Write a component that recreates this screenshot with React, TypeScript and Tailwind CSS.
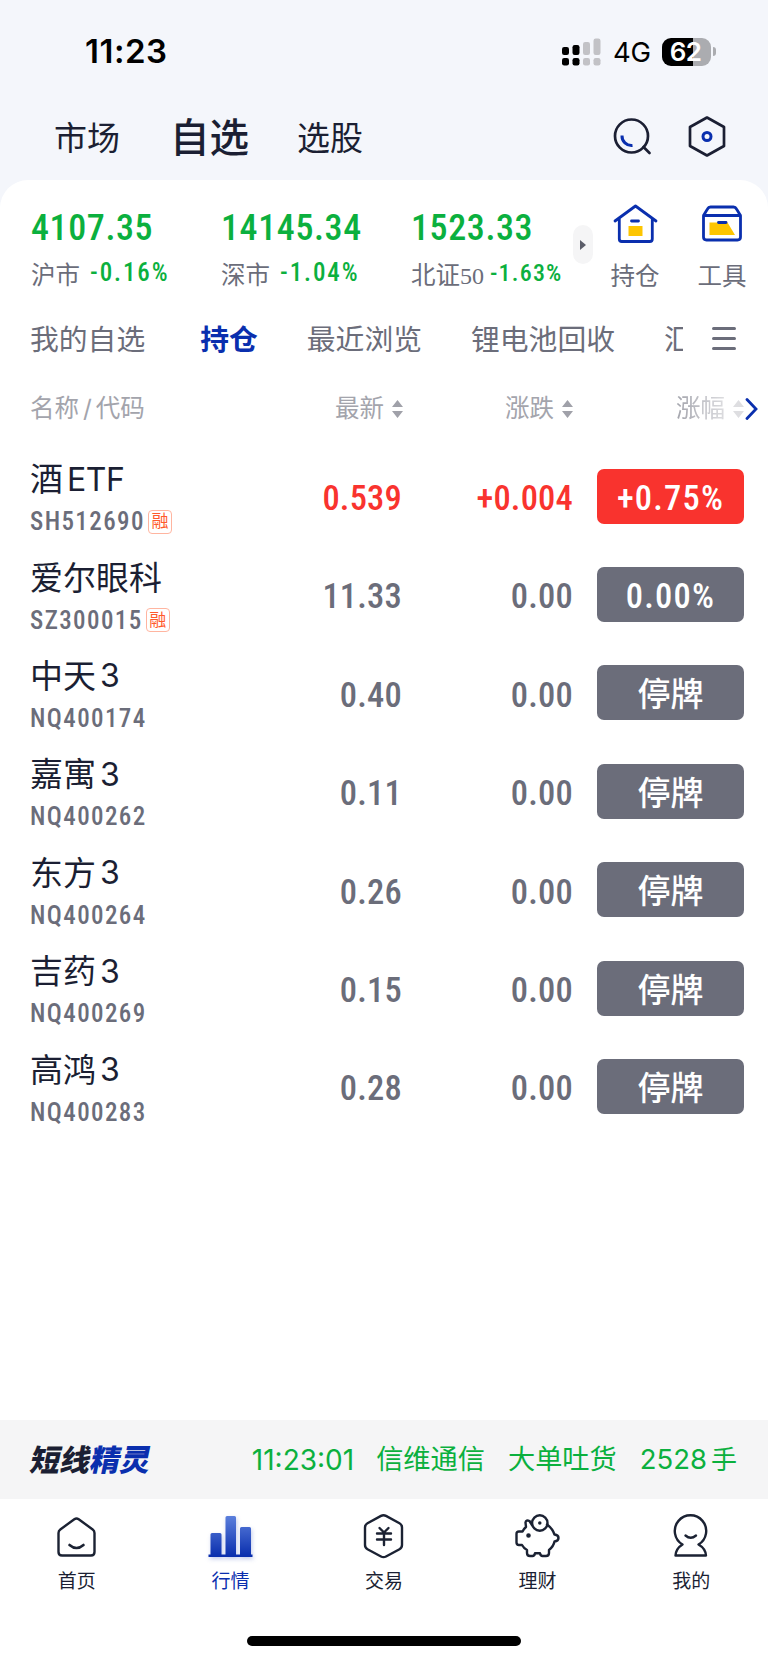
import type { ReactNode } from 'react';
import clsx from 'clsx';

const NUM = 'font-["Roboto_Condensed",Roboto,"Noto_Sans_CJK_SC",sans-serif]';

const indices = [
  { name: '沪市', value: '4107.35', change: '-0.16%', width: 'w-[190px]' },
  { name: '深市', value: '14145.34', change: '-1.04%', width: 'w-[190px]' },
  { name: '北证', digits: '50', value: '1523.33', change: '-1.63%', width: 'w-[162px]' },
];

const groups = ['我的自选', '持仓', '最近浏览', '锂电池回收', '汇'];

type Stock = {
  name: string;
  suffix?: string;
  code: string;
  margin?: boolean;
  price: string;
  diff: string;
  rate: string;
  up?: boolean;
};

const stocks: Stock[] = [
  { name: '酒', suffix: 'ETF', code: 'SH512690', margin: true, price: '0.539', diff: '+0.004', rate: '+0.75%', up: true },
  { name: '爱尔眼科', code: 'SZ300015', margin: true, price: '11.33', diff: '0.00', rate: '0.00%' },
  { name: '中天', suffix: '3', code: 'NQ400174', price: '0.40', diff: '0.00', rate: '停牌' },
  { name: '嘉寓', suffix: '3', code: 'NQ400262', price: '0.11', diff: '0.00', rate: '停牌' },
  { name: '东方', suffix: '3', code: 'NQ400264', price: '0.26', diff: '0.00', rate: '停牌' },
  { name: '吉药', suffix: '3', code: 'NQ400269', price: '0.15', diff: '0.00', rate: '停牌' },
  { name: '高鸿', suffix: '3', code: 'NQ400283', price: '0.28', diff: '0.00', rate: '停牌' },
];

const StatusBar = () => (
  <div className="flex h-[103px] items-center pl-[85px] pr-[52px]">
    <span className="text-[33px] font-semibold leading-none tracking-[0.5px] text-black">11:23</span>
    <div className="ml-auto flex items-center">
      <svg width="39" height="28" viewBox="0 0 39 28">
        <g fill="#000">
          <rect x="0" y="9" width="7" height="8" rx="2.2" />
          <rect x="10.5" y="7" width="7" height="10" rx="2.2" />
          <rect x="0" y="20" width="7" height="7.5" rx="2.2" />
          <rect x="10.5" y="20" width="7" height="7.5" rx="2.2" />
        </g>
        <g fill="#c2c2c6">
          <rect x="21" y="4" width="7" height="13" rx="2.2" />
          <rect x="31.5" y="0.5" width="7" height="16.5" rx="2.2" />
          <rect x="21" y="20" width="7" height="7.5" rx="2.2" />
          <rect x="31.5" y="20" width="7" height="7.5" rx="2.2" />
        </g>
      </svg>
      <span className="ml-[12px] w-[38px] pt-[2px] text-[27.5px] leading-none tracking-[-0.2px] text-black">4G</span>
      <div className="ml-[11px] flex h-7 w-[49px] items-center justify-center rounded-[9px] bg-[linear-gradient(90deg,#000_31px,#abacb0_31px)] pr-[2px] text-[26px] font-semibold leading-none tracking-[-0.6px] text-white">
        62
      </div>
      <div className="ml-[2px] h-[9px] w-[3px] rounded-r-full bg-[#abacb0]" />
    </div>
  </div>
);

const TopNav = () => (
  <div className="flex h-[77px] items-center pl-[54px] pr-[42px] pb-[10px] text-[#1b1f33]">
    <span className="w-[116px] pt-[3px] text-[33px] leading-none">市场</span>
    <span className="w-[127px] pt-[4px] text-[39.5px] font-medium leading-none">自选</span>
    <span className="pt-[3px] text-[33px] leading-none">选股</span>
    <svg className="ml-auto" width="40" height="40" viewBox="0 0 40 40" fill="none" strokeLinecap="round">
      <circle cx="19.5" cy="19" r="16.5" stroke="#1b1f33" strokeWidth="2.7" />
      <path d="M31.5 30l6 6" stroke="#1b1f33" strokeWidth="2.7" />
      <path d="M10 18.500a9.5 9.5 0 0 0 10.500 10" stroke="#0a2fae" strokeWidth="3" strokeLinecap="butt" />
    </svg>
    <svg className="ml-[36px]" width="38" height="42" viewBox="0 0 38 42" fill="none">
      <path d="M19 1.500l17 9.500v19L19 39.500 2 30V11z" stroke="#1b1f33" strokeWidth="2.7" strokeLinejoin="round" />
      <circle cx="19" cy="20.500" r="4" stroke="#0a2fae" strokeWidth="3" />
    </svg>
  </div>
);

const Shortcut = ({ label, className, children }: { label: string; className: string; children: ReactNode }) => (
  <div className={clsx('flex w-[50px] flex-col items-center pt-[22px]', className)}>
    <svg
      width="46"
      height="42"
      viewBox="0 0 46 42"
      fill="none"
      stroke="#0a2fae"
      strokeWidth="2.8"
      strokeLinejoin="round"
      strokeLinecap="round"
      className="shrink-0"
    >
      {children}
    </svg>
    <span className="mt-[20px] whitespace-nowrap text-[24.5px] leading-none text-[#6b6d7a]">{label}</span>
  </div>
);

const Indices = () => (
  <div className="flex h-[125px] pl-[31px]">
    {indices.map((item) => (
      <div key={item.name} className={clsx('shrink-0 pt-[30px]', item.width)}>
        <div className={clsx(NUM, 'text-[36px] font-medium leading-[36px] tracking-[0.6px] text-[#0bb03e]')}>
          {item.value}
        </div>
        <div className="mt-[17px] flex items-baseline leading-[24px]">
          <span className="whitespace-nowrap text-[24.5px] text-[#6b6d7a]">
            {item.name}
            {item.digits && <span className='font-["Liberation_Serif",serif] text-[24px]'>{item.digits}</span>}
          </span>
          <span
            className={clsx(
              NUM,
              'relative -top-[3px] font-medium text-[#0bb03e]',
              item.digits ? 'ml-[6px] text-[24px] tracking-[1.2px]' : 'ml-[10px] text-[25px] tracking-[1.9px]',
            )}
          >
            {item.change}
          </span>
        </div>
      </div>
    ))}
    <div className="mt-[45px] flex h-[39px] w-5 shrink-0 items-center justify-center rounded-full bg-[#f5f5f6]">
      <svg width="6" height="10" viewBox="0 0 6 10">
        <path d="M0 0l6 5-6 5z" fill="#5b5d69" />
      </svg>
    </div>
    <Shortcut label="持仓" className="ml-[17px]">
      <path d="M3 19L23.500 4 44 19M7.300 16.500V37q0 2.500 2.500 2.500h28q2.500 0 2.500-2.500V16.500M19.500 19h7" />
      <path d="M16.500 24h14v10h-14z" fill="#fdc500" stroke="none" />
    </Shortcut>
    <Shortcut label="工具" className="ml-[37px]">
      <path d="M4.500 13.500V35q0 3 3 3h31q3 0 3-3V13.500zM4.500 13.500l4-6.500q1-2 3-2h23q2 0 3 2l4 6.500" />
      <path d="M10.500 20.500h18L36 33H10.500z" fill="#fdc500" stroke="none" />
      <path d="M19.500 20.500h7.500" />
    </Shortcut>
  </div>
);

const GroupTabs = () => (
  <div className="flex h-[70px] items-center pl-[30px]">
    <div className="flex w-[653px] gap-[49px] overflow-hidden text-[28.8px] leading-[40px] text-[#6b6d7a]">
      {groups.map((name) => (
        <span
          key={name}
          className={clsx('shrink-0 whitespace-nowrap first:mr-[6px]', name === '持仓' && 'font-bold text-[#0a2fae]')}
        >
          {name}
        </span>
      ))}
    </div>
    <div className="mb-[4px] ml-[29px] flex w-[24px] flex-col gap-[7px]">
      <i className="h-[3px] rounded-full bg-[#6b6d7a]" />
      <i className="h-[3px] rounded-full bg-[#6b6d7a]" />
      <i className="h-[3px] rounded-full bg-[#6b6d7a]" />
    </div>
  </div>
);

const SortArrows = () => (
  <svg width="11" height="18" viewBox="0 0 11 18" fill="#a0a1a9">
    <path d="M5.500 0L11 7H0zM0 11h11l-5.500 7z" />
  </svg>
);

const ColumnHeader = () => (
  <div className="flex h-[68px] items-center pb-[1px] pl-[30px] text-[24.5px] leading-none text-[#a3a4ac]">
    <span className="w-[180px]">
      名称<span className="mx-[4px]">/</span>代码
    </span>
    <div className="flex w-[193px] items-center justify-end gap-2">
      最新 <SortArrows />
    </div>
    <div className="flex w-[170px] items-center justify-end gap-2">
      涨跌 <SortArrows />
    </div>
    <div className="flex w-[171px] items-center justify-end gap-2 [mask-image:linear-gradient(90deg,#000_60%,rgba(0,0,0,0.35)_90%)]">
      涨幅 <SortArrows />
    </div>
    <svg className="ml-[1px]" width="13" height="22" viewBox="0 0 13 22" fill="none">
      <path d="M2 1.500l9 9.500-9 9.500" stroke="#0a2fae" strokeWidth="2.8" strokeLinecap="round" />
    </svg>
  </div>
);

const StockRow = ({ stock }: { stock: Stock }) => {
  const tone = stock.up ? 'text-[#f9332e]' : 'text-[#6b6d7a]';
  const halted = stock.rate === '停牌';

  return (
    <div className="flex h-[98.4px] items-center pl-[30px]">
      <div className="w-[190px] pt-[9px]">
        <div className="flex h-[42px] items-center gap-[4px] whitespace-nowrap text-[33px] leading-none text-[#1b1f33]">
          {stock.name}
          {stock.suffix && <span className="text-[32px] tracking-[-0.5px]">{stock.suffix}</span>}
        </div>
        <div className="flex h-[42px] items-center text-[#6b6d7a]">
          <span className={clsx(NUM, 'text-[25px] font-medium leading-none tracking-[1.4px]')}>{stock.code}</span>
          {stock.margin && (
            <span className="ml-[3px] flex size-6 items-center justify-center rounded-[4px] border border-[#ffb5a0] text-[17px] leading-none text-[#ff5a2b]">
              融
            </span>
          )}
        </div>
      </div>
      <span className={clsx(NUM, tone, 'w-[182px] pt-[4px] text-right text-[34.5px] font-medium leading-none tracking-[0.2px]')}>
        {stock.price}
      </span>
      <span className={clsx(NUM, tone, 'w-[171px] pt-[4px] text-right text-[34.5px] font-medium leading-none tracking-[0.2px]')}>
        {stock.diff}
      </span>
      <span
        className={clsx(
          'ml-6 flex h-[55px] w-[147px] items-center justify-center rounded-[7px] pt-[4px] font-medium leading-none text-white',
          stock.up ? 'bg-[#f9332e]' : 'bg-[#6b6d7a]',
          halted ? 'text-[33px]' : [NUM, 'text-[34.5px] tracking-[1.2px]'],
        )}
      >
        {stock.rate}
      </span>
    </div>
  );
};

const Ticker = () => (
  <div className="flex h-[79px] items-center bg-[#f5f5f6] pl-[31px] pr-[31px] text-[27.2px] leading-none text-[#0bb03e]">
    <span className="-skew-x-12 text-[30px] font-black text-[#1b1f33]">
      短线<span className="text-[#0a2fae]">精灵</span>
    </span>
    <span className="ml-auto text-[28px]">11:23:01</span>
    <span className="ml-[22px]">信维通信</span>
    <span className="ml-[23px]">大单吐货</span>
    <span className="ml-[23px] flex items-center gap-1 text-[27.5px]">
      2528<span className="text-[26px]">手</span>
    </span>
  </div>
);

const HomeIcon = () => (
  <svg width="46" height="46" viewBox="0 0 46 46" fill="none" stroke="#1b2233" strokeWidth="2.4" strokeLinecap="round" strokeLinejoin="round">
    <path d="M20.300 5.200q2.200-1.500 4.400 0l14 10.300q1.800 1.300 1.800 3.500V38q0 3.500-3.500 3.500H8Q4.500 41.500 4.500 38V19q0-2.200 1.800-3.500z" />
    <path d="M15.500 31q7 6 14 0" strokeWidth="2.6" />
  </svg>
);

const MarketIcon = () => (
  <svg width="46" height="46" viewBox="0 0 46 46" className="drop-shadow-[1px_2px_2px_rgba(10,47,174,0.25)]">
    <defs>
      <linearGradient id="bars" x1="0" y1="2" x2="0" y2="42" gradientUnits="userSpaceOnUse">
        <stop offset="0" stopColor="#5b7fdc" />
        <stop offset="1" stopColor="#0a2fae" />
      </linearGradient>
    </defs>
    <path
      fill="url(#bars)"
      d="M3.500 20.500Q3.500 19 5 19h8q1.500 0 1.500 1.500V40.500h4V3.500Q18.500 2 20 2h7.500Q29 2 29 3.500v37h4v-26q0-1.500 1.500-1.500h8q1.500 0 1.500 1.500v26h1.500v2.500H1.500v-2.500h2z"
    />
  </svg>
);

const TradeIcon = () => (
  <svg width="46" height="46" viewBox="0 0 46 46" fill="none" stroke="#1b2233" strokeWidth="2.4" strokeLinecap="round" strokeLinejoin="round">
    <path d="M20 1.900q2.500-1.300 5 0l13.500 7.300q2.500 1.400 2.500 4.200V31q0 2.800-2.500 4.200L25 42.500q-2.500 1.300-5 0L6.500 35.200Q4 33.800 4 31V13.400q0-2.800 2.500-4.200z" />
    <path d="M18.500 14l4.500 4.500 4.500-4.500M16 19.500h14M16 25.500h14M23 19.500V31" />
  </svg>
);

const PiggyIcon = () => (
  <svg width="46" height="46" viewBox="0 0 46 46" fill="none" stroke="#1b2233" strokeWidth="2.4" strokeLinecap="round" strokeLinejoin="round">
    <circle cx="24.8" cy="9" r="7.7" />
    <circle cx="24.8" cy="9" r="1" fill="#1b2233" strokeWidth="1.5" />
    <path d="M17 11l-2.500-4Q11 5.500 10.500 8.500l.5 4.500q-2.500 2-3.500 4.500H4q-2.500 0-2.500 2.500v8.500q0 2.500 2.500 2.500h3q2 3.500 5 5V39q0 3 3 3h2.500q2 0 2.500-2.800h5q.5 2.800 2.500 2.800h3.500q3 0 3-3v-3q4.500-3.500 5.500-8.500 4-.5 4-3.500t-4-3.500q-2-6-7.500-10" />
    <circle cx="13.5" cy="21.5" r="1.3" fill="#1b2233" strokeWidth="2" />
  </svg>
);

const MineIcon = () => (
  <svg width="46" height="46" viewBox="0 0 46 46" fill="none" stroke="#1b2233" strokeWidth="2.4" strokeLinecap="round" strokeLinejoin="round">
    <path d="M14.500 30.500A15.700 15.700 0 1 1 30.500 30.500Q37.500 34.500 38 41.500H7.500Q8 34.500 14.500 30.500z" />
    <path d="M17.500 21.500q5.200 4.500 10.500 0" />
  </svg>
);

const navItems = [
  { label: '首页', icon: <HomeIcon /> },
  { label: '行情', icon: <MarketIcon />, active: true },
  { label: '交易', icon: <TradeIcon /> },
  { label: '理财', icon: <PiggyIcon /> },
  { label: '我的', icon: <MineIcon /> },
];

const BottomNav = () => (
  <div className="grid h-[137px] grid-cols-5 pt-[15px]">
    {navItems.map((item) => (
      <div key={item.label} className="flex flex-col items-center">
        {item.icon}
        <span className={clsx('mt-[12px] text-[19px] leading-none', item.active ? 'text-[#0a2fae]' : 'text-[#1b1f33]')}>
          {item.label}
        </span>
      </div>
    ))}
  </div>
);

export default function App() {
  return (
    <div className='flex h-[1663px] w-[768px] flex-col overflow-hidden bg-[#f4f6fb] font-[Inter,"Noto_Sans_CJK_SC",sans-serif]'>
      <StatusBar />
      <TopNav />
      <div className="flex flex-1 flex-col rounded-t-[28px] bg-white">
        <Indices />
        <GroupTabs />
        <ColumnHeader />
        <div className="pt-[4px]">
          {stocks.map((stock) => (
            <StockRow key={stock.code} stock={stock} />
          ))}
        </div>
        <div className="mt-auto">
          <Ticker />
          <BottomNav />
          <div className="flex h-[27px] justify-center">
            <div className="h-[10px] w-[274px] rounded-full bg-black" />
          </div>
        </div>
      </div>
    </div>
  );
}
